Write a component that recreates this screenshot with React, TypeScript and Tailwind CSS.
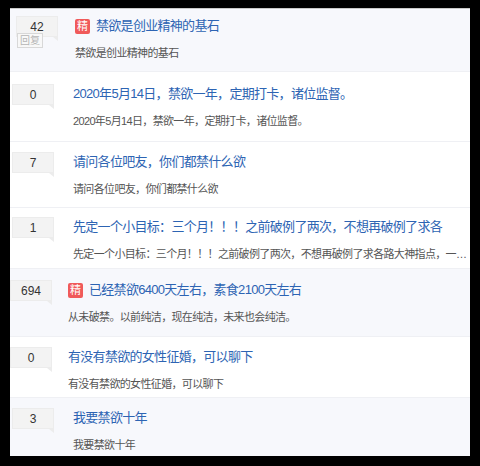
import React from 'react';

interface Thread {
  count: string;
  title: string;
  abstract: string;
  jing?: boolean;
  light?: boolean;
  reply?: boolean;
  pad: string;
  left: string;
}

const threads: Thread[] = [
  {
    count: '42',
    title: '禁欲是创业精神的基石',
    abstract: '禁欲是创业精神的基石',
    jing: true,
    light: true,
    reply: true,
    pad: 'pt-[7px] pb-[9px]',
    left: 'w-[65px] pl-[6px]',
  },
  {
    count: '0',
    title: '2020年5月14日，禁欲一年，定期打卡，诸位监督。',
    abstract: '2020年5月14日，禁欲一年，定期打卡，诸位监督。',
    pad: 'pt-[12px] pb-[11px]',
    left: 'w-[63px] pl-[2px]',
  },
  {
    count: '7',
    title: '请问各位吧友，你们都禁什么欲',
    abstract: '请问各位吧友，你们都禁什么欲',
    pad: 'pt-[10px] pb-[9px]',
    left: 'w-[63px] pl-[2px]',
  },
  {
    count: '1',
    title: '先定一个小目标：三个月！！！之前破例了两次，不想再破例了求各',
    abstract: '先定一个小目标：三个月！！！之前破例了两次，不想再破例了求各路大神指点，一…',
    pad: 'pt-[9px] pb-[5px]',
    left: 'w-[63px] pl-[2px]',
  },
  {
    count: '694',
    title: '已经禁欲6400天左右，素食2100天左右',
    abstract: '从未破禁。以前纯洁，现在纯洁，未来也会纯洁。',
    jing: true,
    light: true,
    pad: 'pt-[11px] pb-[10px]',
    left: 'w-[58px] pl-0',
  },
  {
    count: '0',
    title: '有没有禁欲的女性征婚，可以聊下',
    abstract: '有没有禁欲的女性征婚，可以聊下',
    pad: 'pt-[10px] pb-[4px]',
    left: 'w-[58px] pl-0',
  },
  {
    count: '3',
    title: '我要禁欲十年',
    abstract: '我要禁欲十年',
    light: true,
    pad: 'pt-[10px] pb-[3px]',
    left: 'w-[63px] pl-[2px]',
  },
];

const CountBox: React.FC<{ count: string; reply?: boolean }> = ({ count, reply }) => (
  <div className="relative w-[42px]">
    <div className="h-[21px] bg-[#f3f3f3] border border-[#ececec] flex items-center justify-center text-[12px] text-[#333] font-['Liberation_Sans',sans-serif]">
      {count}
    </div>
    <div className="absolute right-0 bottom-[-4px] w-0 h-0 border-l-[5px] border-l-transparent border-t-[4px] border-t-[#ececec]" />
    {reply && (
      <div className="absolute left-[1px] top-[17px] px-[2px] h-[15px] leading-[13px] border border-[#d8d8d8] bg-[#f8f8f8] text-[10px] text-[#b5b5b5]">
        回复
      </div>
    )}
  </div>
);

const Row: React.FC<{ t: Thread; last?: boolean }> = ({ t, last }) => (
  <div
    className={`flex ${t.pad} ${last ? '' : 'border-b border-[#eff0f4]'} ${
      t.light ? 'bg-[#f7f8fc]' : 'bg-white'
    }`}
  >
    <div className={`shrink-0 ${t.left}`}>
      <CountBox count={t.count} reply={t.reply} />
    </div>
    <div className="flex-1 min-w-0">
      <div className="h-[20px] flex items-center gap-[6px] whitespace-nowrap overflow-hidden">
        {t.jing && (
          <span className="w-[15px] h-[15px] shrink-0 rounded-[2px] bg-[#f05a5a] text-white text-[11px] leading-[15px] text-center">
            精
          </span>
        )}
        <span className="text-[13px] tracking-[-0.7px] text-[#2d64b3]">{t.title}</span>
      </div>
      <div className="mt-[8px] h-[18px] leading-[18px] text-[11px] tracking-[-0.65px] text-[#555] whitespace-nowrap">
        {t.abstract}
      </div>
    </div>
  </div>
);

export default function App() {
  return (
    <div className="w-[480px] h-[466px] bg-black pt-[8px] px-[10px] pb-[10px] font-['Liberation_Sans','Noto_Sans_CJK_SC',sans-serif]">
      <div className="h-full bg-white border-t border-[#c9c9c9] overflow-hidden">
        {threads.map((t, i) => (
          <Row key={i} t={t} last={i === threads.length - 1} />
        ))}
      </div>
    </div>
  );
}
